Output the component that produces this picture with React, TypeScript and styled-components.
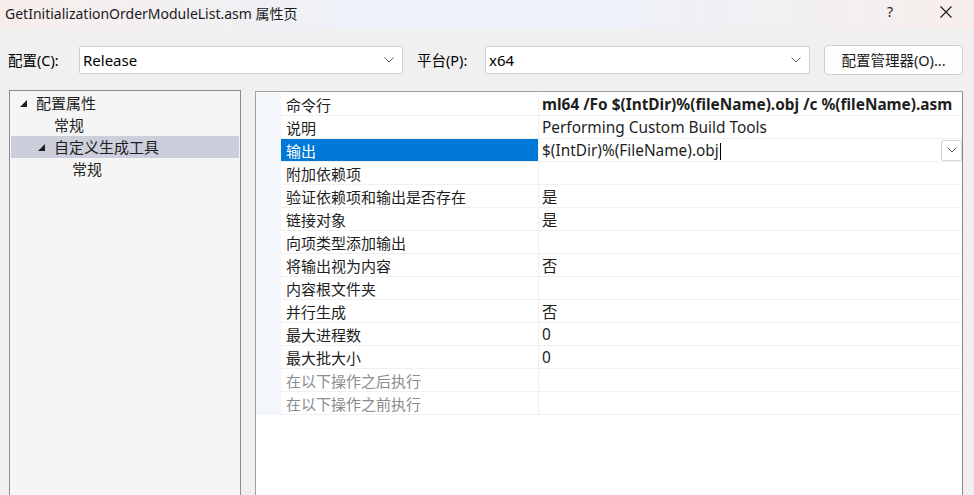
import styled, { createGlobalStyle } from "styled-components"

const font = `"Noto Sans", "Noto Sans CJK SC", sans-serif`

const GlobalStyle = createGlobalStyle`
    html, body {
        margin: 0;
        padding: 0;
        background: #f0f0f0;
        font-family: ${font};
        color: #000;
    }
    * {
        box-sizing: border-box;
    }
`

const rows: { name: string; value?: string; bold?: boolean; selected?: boolean; disabled?: boolean }[] = [
    { name: "命令行", value: "ml64 /Fo $(IntDir)%(fileName).obj /c %(fileName).asm", bold: true },
    { name: "说明", value: "Performing Custom Build Tools" },
    { name: "输出", value: "$(IntDir)%(FileName).obj", selected: true },
    { name: "附加依赖项" },
    { name: "验证依赖项和输出是否存在", value: "是" },
    { name: "链接对象", value: "是" },
    { name: "向项类型添加输出" },
    { name: "将输出视为内容", value: "否" },
    { name: "内容根文件夹" },
    { name: "并行生成", value: "否" },
    { name: "最大进程数", value: "0" },
    { name: "最大批大小", value: "0" },
    { name: "在以下操作之后执行", disabled: true },
    { name: "在以下操作之前执行", disabled: true }
]

const Chevron = () => (
    <svg width="10" height="6" viewBox="0 0 10 6">
        <path d="M0.5 0.5 L5 5 L9.5 0.5" fill="none" stroke="#606060" strokeWidth="1" />
    </svg>
)

const Expander = () => (
    <svg width="7" height="7" viewBox="0 0 7 7">
        <path d="M7 0 L7 7 L0 7 Z" fill="#1e1e1e" />
    </svg>
)

const App = () => {
    return (
        <Window>
            <GlobalStyle />
            <TitleBar>
                <Title>GetInitializationOrderModuleList.asm 属性页</Title>
                <TitleButtons>
                    <HelpGlyph>?</HelpGlyph>
                    <svg width="12" height="12" viewBox="0 0 12 12">
                        <path d="M0.5 0.5 L11.5 11.5 M11.5 0.5 L0.5 11.5" stroke="#1a1a1a" strokeWidth="1.1" />
                    </svg>
                </TitleButtons>
            </TitleBar>

            <Toolbar>
                <Label $width={71}>配置(C):</Label>
                <Combo $width={324}>
                    <span>Release</span>
                    <Chevron />
                </Combo>
                <Label $gap={14} $width={68}>平台(P):</Label>
                <Combo $width={325}>
                    <span>x64</span>
                    <Chevron />
                </Combo>
                <ManagerButton>配置管理器(O)...</ManagerButton>
            </Toolbar>

            <Main>
                <Tree>
                    <TreeItem $indent={9}>
                        <Expander />
                        <span>配置属性</span>
                    </TreeItem>
                    <TreeItem $indent={43}>常规</TreeItem>
                    <TreeItem $indent={27} $selected>
                        <Expander />
                        <span>自定义生成工具</span>
                    </TreeItem>
                    <TreeItem $indent={61}>常规</TreeItem>
                </Tree>

                <Grid>
                    <Rows>
                        {rows.map((r) => (
                            <Row key={r.name}>
                                <Margin />
                                <NameCell $selected={r.selected} $disabled={r.disabled}>
                                    {r.name}
                                </NameCell>
                                <ValueCell $bold={r.bold}>
                                    {r.selected ? (
                                        <Editor>
                                            <span>
                                                {r.value}
                                                <Caret />
                                            </span>
                                            <DropButton>
                                                <Chevron />
                                            </DropButton>
                                        </Editor>
                                    ) : (
                                        r.value
                                    )}
                                </ValueCell>
                            </Row>
                        ))}
                    </Rows>
                </Grid>
            </Main>
        </Window>
    )
}

const Window = styled.div`
    width: 974px;
    height: 495px;
    display: flex;
    flex-direction: column;
    overflow: hidden;
    background: #f0f0f0;
`

const TitleBar = styled.div`
    height: 29px;
    flex-shrink: 0;
    display: flex;
    align-items: center;
    justify-content: space-between;
    padding: 0 22px 0 5px;
    background: linear-gradient(90deg, #f7eeec 0%, #eef1f7 35%, #eef1f7 65%, #f7eeec 100%);
`

const Title = styled.div`
    font-size: 14px;
    color: #1a1a1a;
    margin-top: -4px;
`

const TitleButtons = styled.div`
    display: flex;
    align-items: center;
    gap: 47px;
    margin-top: -6px;
`

const HelpGlyph = styled.span`
    font-size: 14px;
    color: #1a1a1a;
`

const Toolbar = styled.div`
    height: 61px;
    flex-shrink: 0;
    display: flex;
    align-items: center;
    padding: 0 0 0 8px;
`

const Label = styled.span<{ $gap?: number; $width: number }>`
    font-size: 14.5px;
    margin-left: ${({ $gap }) => $gap ?? 0}px;
    width: ${({ $width }) => $width}px;
    white-space: nowrap;
`

const Combo = styled.div<{ $width: number }>`
    width: ${({ $width }) => $width}px;
    height: 28px;
    background: #fff;
    border: 1px solid #cfcfcf;
    border-radius: 2px;
    display: flex;
    align-items: center;
    justify-content: space-between;
    padding: 0 8px 0 3px;
    font-size: 15px;
`

const ManagerButton = styled.button`
    margin-left: 14px;
    width: 139px;
    height: 30px;
    background: #fdfdfd;
    border: 1px solid #d0d0d0;
    border-radius: 4px;
    font-family: ${font};
    font-size: 14.5px;
    color: #1a1a1a;
    padding: 0;
`

const Main = styled.div`
    flex: 1;
    display: flex;
    gap: 14px;
    padding: 0 11px 0 9px;
    min-height: 0;
`

const Tree = styled.div`
    width: 232px;
    height: 420px;
    background: #f5f5f5;
    border: 1px solid #8d8d8d;
    padding: 1px 1px 0 1px;
    display: flex;
    flex-direction: column;
`

const TreeItem = styled.div<{ $indent: number; $selected?: boolean }>`
    height: 22px;
    display: flex;
    align-items: center;
    gap: 9px;
    padding-left: ${({ $indent }) => $indent}px;
    padding-bottom: 1px;
    background: ${({ $selected }) => ($selected ? "#cccedb" : "transparent")};
    font-size: 15px;
    color: #1e1e1e;

    svg {
        margin-top: 1px;
    }
`

const Grid = styled.div`
    flex: 1;
    margin-top: 1px;
    height: 420px;
    background: #fff;
    border: 1px solid #a0a0a0;
    border-right-color: #8a8a8a;
    padding-top: 1px;
`

const Rows = styled.div`
    display: flex;
    flex-direction: column;
    background: #f3f6fb;
`

const Row = styled.div`
    height: 23px;
    display: grid;
    grid-template-columns: 25px 258px 1fr;
`

const Margin = styled.div`
    background: #f3f6fb;
`

const NameCell = styled.div<{ $selected?: boolean; $disabled?: boolean }>`
    display: flex;
    align-items: center;
    padding-left: 5px;
    font-size: 15px;
    white-space: nowrap;
    border-bottom: 1px solid #f0f0f0;
    border-right: 1px solid #f0f0f0;
    background: ${({ $selected }) => ($selected ? "#0078d7" : "#fff")};
    color: ${({ $selected, $disabled }) => ($selected ? "#fff" : $disabled ? "#8c8c8c" : "#1e1e1e")};
`

const ValueCell = styled.div<{ $bold?: boolean }>`
    display: flex;
    align-items: center;
    padding-left: 3px;
    font-size: 15.4px;
    font-weight: ${({ $bold }) => ($bold ? 700 : 400)};
    white-space: nowrap;
    overflow: hidden;
    background: #fff;
    border-bottom: 1px solid #f0f0f0;
    color: #1e1e1e;
`

const Editor = styled.div`
    flex: 1;
    display: flex;
    align-items: center;
    justify-content: space-between;
    height: 100%;
`

const Caret = styled.span`
    display: inline-block;
    width: 1px;
    height: 17px;
    background: #000;
    vertical-align: middle;
    margin-left: 1px;
`

const DropButton = styled.div`
    width: 21px;
    height: 21px;
    border: 1px solid #d5d5d5;
    border-radius: 2px;
    background: #fff;
    display: flex;
    align-items: center;
    justify-content: center;
`

export default App
